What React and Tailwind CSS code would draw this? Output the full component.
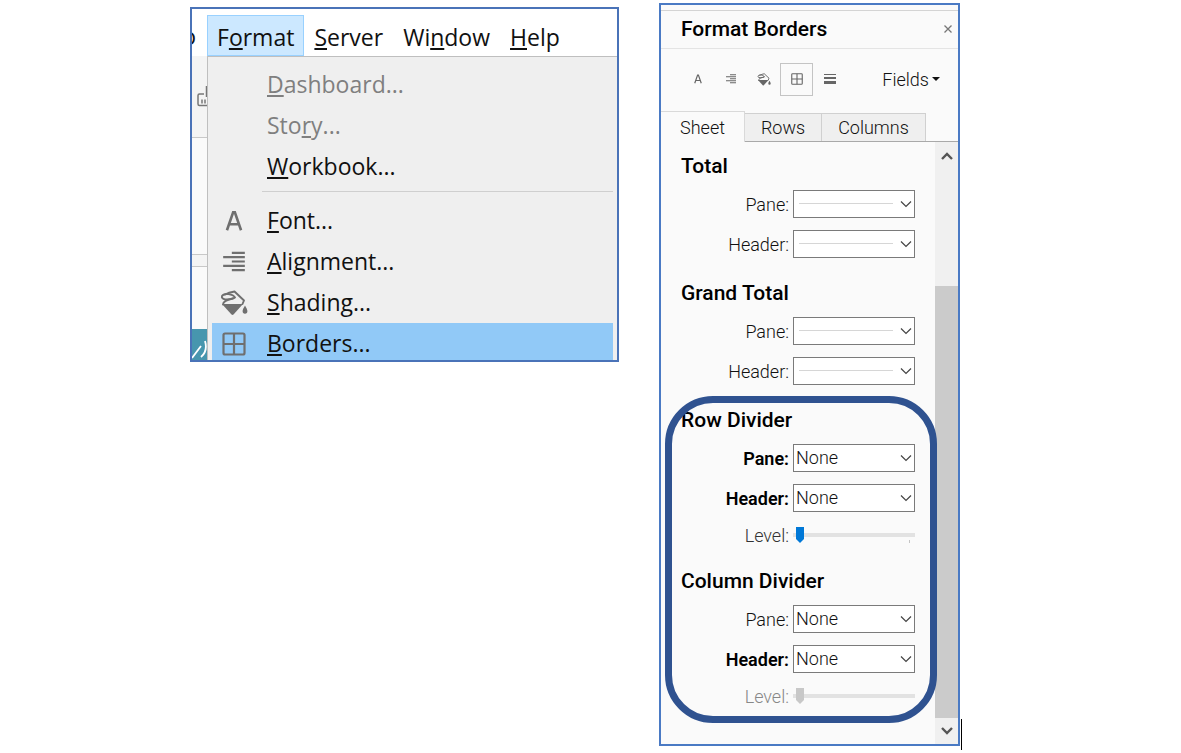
import React from "react";

function FontIcon({ className }) {
  return (
    <svg viewBox="0 0 24 24" className={className} fill="none" stroke="currentColor" strokeWidth="2.4" aria-hidden="true">
      <path d="M5.500 20.500 11.200 4h1.600l5.700 16.500M8 15h8" />
    </svg>
  );
}

function AlignIcon({ className }) {
  return (
    <svg viewBox="0 0 24 24" className={className} fill="none" stroke="currentColor" strokeWidth="2" aria-hidden="true">
      <path d="M10 3.500h12M2 7.500h20M10 11.500h12M2 15.500h20M10 19.500h12" />
    </svg>
  );
}

function ShadingIcon({ className }) {
  return (
    <svg viewBox="0 0 28 26" className={className} fill="none" stroke="currentColor" strokeWidth="1.900" strokeLinejoin="round" strokeLinecap="round" aria-hidden="true">
      <path d="M5 4.500C8 3 12 2 14.500 1.500L24 10.500 22.500 14" />
      <path d="M15 7.500C13 4 4 2.500 2 6c-1.200 3.500 5 4.800 12.500 1.800" />
      <path d="M13 8.500C8 9.500 3 11 3 14.500" />
      <path d="M2 14h21L13.500 24.500Q12.500 25.300 11.500 24.500z" fill="currentColor" stroke="none" />
      <path d="M25 15.500c1.300 2.400 2.400 4 2.400 5.600a2.400 2.600 0 0 1-4.800 0c0-1.600 1.100-3.200 2.400-5.600z" fill="currentColor" stroke="none" />
    </svg>
  );
}

function BordersIcon({ className }) {
  return (
    <svg viewBox="0 0 24 24" className={className} fill="none" stroke="currentColor" strokeWidth="2.200" aria-hidden="true">
      <rect x="1.500" y="1.500" width="21" height="21" rx="1.500" />
      <path d="M12 1.500v21M1.500 12h21" />
    </svg>
  );
}

function LinesIcon({ className }) {
  return (
    <svg viewBox="0 0 12 12" className={className} fill="currentColor" aria-hidden="true">
      <path d="M0 1h12v1H0zM0 4h12v2H0zM0 8h12v3H0z" />
    </svg>
  );
}

const menuButton = "h-[41px] border border-transparent px-[9px] leading-[43px] whitespace-nowrap";

function MenuItem({ icon, disabled, active, children }) {
  return (
    <button
      type="button"
      disabled={disabled}
      className={`ml-1 mr-1 flex items-start overflow-hidden text-left leading-[41px] ${
        active ? "h-[37px] bg-[#91c9f7]" : "h-[41px]"
      } ${disabled ? "text-[#7f7f7f]" : "text-[#111]"}`}
    >
      <span className="flex h-[41px] w-[43px] shrink-0 items-center justify-center text-[#6f6f6f]">{icon}</span>
      <span className="ml-3">{children}</span>
    </button>
  );
}

function FormatMenu() {
  return (
    <section className="flex w-[429px] flex-col overflow-hidden border-2 border-[#4a73b8] bg-white font-['Open_Sans','Noto_Sans',sans-serif] text-[23px] text-[#111]">
      <div className="flex h-[47px] items-end">
        <div className="flex h-[41px] w-[15px] justify-end overflow-hidden pr-[11px] leading-[43px]">o</div>
        <nav className="flex">
          <button type="button" className="h-[41px] border border-[#99d1ff] bg-[#cce8ff] px-[9px] leading-[43px] whitespace-nowrap">
            F<u>o</u>rmat
          </button>
          <button type="button" className={menuButton}><u>S</u>erver</button>
          <button type="button" className={menuButton}>Wi<u>n</u>dow</button>
          <button type="button" className={menuButton}><u>H</u>elp</button>
        </nav>
      </div>
      <div className="flex">
        <div className="flex w-[15px] shrink-0 flex-col overflow-hidden bg-[#fafafa]">
          <div className="flex h-[82px] items-center border-b border-[#c8c8c8] bg-[#f4f4f4] pl-[5px]">
            <svg viewBox="0 0 10 24" className="h-6 w-[10px]" fill="none" stroke="#777" strokeWidth="1.500" aria-hidden="true">
              <path d="M7 9H2.500Q1 9 1 10.500V19q0 1.500 1.500 1.500H10M9.500 1v11M5 14.500v4M8 14.500v4" />
            </svg>
          </div>
          <div className="h-[117px] border-b border-[#c8c8c8]" />
          <div className="h-[12px] border-b border-[#c8c8c8] bg-[#f4f4f4]" />
          <div className="grow" />
          <svg viewBox="0 0 15 31" className="h-[31px] w-[15px] bg-[#4796ae]" fill="none" stroke="#fff" strokeWidth="1.800" aria-hidden="true">
            <path d="M0 29 9 17M9 28Q16 22 13 12" />
          </svg>
        </div>
        <div className="flex grow flex-col border-t border-l border-[#bfbfbf] bg-[#efefef] pt-[7px]">
          <MenuItem disabled><u>D</u>ashboard...</MenuItem>
          <MenuItem disabled>Sto<u>r</u>y...</MenuItem>
          <MenuItem><u>W</u>orkbook...</MenuItem>
          <hr className="mt-1 mr-1 mb-2 ml-[54px] border-t border-[#cfcfcf]" />
          <MenuItem icon={<FontIcon className="size-[26px]" />}><u>F</u>ont...</MenuItem>
          <MenuItem icon={<AlignIcon className="size-[26px]" />}><u>A</u>lignment...</MenuItem>
          <MenuItem icon={<ShadingIcon className="h-[26px] w-7" />}><u>S</u>hading...</MenuItem>
          <MenuItem active icon={<BordersIcon className="size-6" />}><u>B</u>orders...</MenuItem>
        </div>
      </div>
    </section>
  );
}

function Field({ id, label, bold, value }) {
  return (
    <div className="flex items-center justify-end gap-1">
      <label htmlFor={id} className={bold ? "font-semibold text-black" : ""}>{label}:</label>
      <div className="relative h-7 w-[122px]">
        <select id={id} defaultValue={value || "line"} className="block h-7 w-full appearance-none border border-[#7a7a7a] bg-white pl-[2px] text-[18px] leading-[26px]">
          {value ? <option value={value}>{value}</option> : <option value="line" aria-label="Line" />}
        </select>
        {!value && <span className="pointer-events-none absolute top-[13px] right-[22px] left-[6px] h-px bg-[#d6d6d6]" />}
        <svg viewBox="0 0 12 8" className="pointer-events-none absolute top-[10px] right-[3px] h-2 w-3" fill="none" stroke="#444" strokeWidth="1.200" aria-hidden="true">
          <path d="M1 1.500 6 6.500 11 1.500" />
        </svg>
      </div>
    </div>
  );
}

function Level({ id, disabled }) {
  return (
    <div className={`flex h-[22px] items-center justify-end gap-1 ${disabled ? "text-[#888]" : "text-[#333]"}`}>
      <label htmlFor={id}>Level:</label>
      <div className="relative flex w-[122px] items-center">
        <input
          id={id}
          type="range"
          min="0"
          max="1"
          defaultValue="0"
          disabled={disabled}
          className={`h-4 w-full appearance-none bg-[linear-gradient(#e2e2e2,#e2e2e2)] bg-[length:100%_4px] bg-center bg-no-repeat px-[3px] [&::-webkit-slider-thumb]:h-4 [&::-webkit-slider-thumb]:w-2 [&::-webkit-slider-thumb]:appearance-none [&::-webkit-slider-thumb]:[clip-path:polygon(0_0,100%_0,100%_75%,50%_100%,0_75%)] ${
            disabled ? "[&::-webkit-slider-thumb]:bg-[#c8c8c8]" : "[&::-webkit-slider-thumb]:bg-[#0078d7]"
          }`}
        />
        {!disabled && <span className="absolute right-[5px] bottom-0 h-[3px] w-px bg-[#c4c4c4]" />}
      </div>
    </div>
  );
}

function Group({ title, children }) {
  return (
    <section className="flex flex-col gap-3">
      <h3 className="text-[21px] leading-6 font-medium text-black">{title}</h3>
      {children}
    </section>
  );
}

function BordersPanel() {
  return (
    <section className="flex w-[301px] flex-col border-2 border-[#4a7ac4] bg-[#fafafa] font-[Roboto,sans-serif] text-[18px] font-light text-[#111]">
      <header className="mt-[5px] flex h-[39px] items-center justify-between border-y border-t-[#d4d4d4] border-b-[#e4e4e4] pr-1 pb-[2px] pl-5">
        <h2 className="text-[21px] leading-6 font-medium text-black">Format Borders</h2>
        <button type="button" aria-label="Close" className="flex size-3 items-center justify-center">
          <svg viewBox="0 0 8 8" className="size-2" stroke="#777" strokeWidth="1.300" aria-hidden="true">
            <path d="M.5.5l7 7M7.500.5l-7 7" />
          </svg>
        </button>
      </header>
      <div className="flex h-[62px] items-center pb-[2px] pl-5 text-[#666]">
        <button type="button" aria-label="Font" className="flex size-[33px] items-center justify-center"><FontIcon className="size-3" /></button>
        <button type="button" aria-label="Alignment" className="flex size-[33px] items-center justify-center"><AlignIcon className="size-3" /></button>
        <button type="button" aria-label="Shading" className="flex size-[33px] items-center justify-center"><ShadingIcon className="h-[13px] w-[14px]" /></button>
        <button type="button" aria-label="Borders" className="flex size-[33px] items-center justify-center border border-[#c4c4c4]"><BordersIcon className="size-3" /></button>
        <button type="button" aria-label="Lines" className="flex size-[33px] items-center justify-center"><LinesIcon className="size-3" /></button>
        <button type="button" className="mr-[18px] ml-auto flex items-center gap-[3px] text-[#111]">
          Fields
          <svg viewBox="0 0 8 4" className="h-1 w-2" fill="#111" aria-hidden="true"><path d="M0 0h8L4 4z" /></svg>
        </button>
      </div>
      <div role="tablist" className="flex h-[31px] items-stretch">
        <button type="button" role="tab" aria-selected="true" className="w-[84px] border-t border-r border-[#d9d9d9]">Sheet</button>
        <div className="flex grow border-b border-[#a9a9a9] pt-[2px]">
          <button type="button" role="tab" aria-selected="false" className="w-[77px] border-t border-r border-[#d0d0d0] bg-[#efefef]">Rows</button>
          <button type="button" role="tab" aria-selected="false" className="w-[104px] border-t border-r border-[#d0d0d0] bg-[#efefef]">Columns</button>
        </div>
      </div>
      <div className="flex">
        <div className="flex grow flex-col gap-[23px] px-5 pt-3 pb-[37px]">
          <Group title="Total">
            <Field id="total-pane" label="Pane" />
            <Field id="total-header" label="Header" />
          </Group>
          <Group title="Grand Total">
            <Field id="grand-pane" label="Pane" />
            <Field id="grand-header" label="Header" />
          </Group>
          <div className="relative flex flex-col gap-[23px]">
            <Group title="Row Divider">
              <Field id="row-pane" label="Pane" value="None" bold />
              <Field id="row-header" label="Header" value="None" bold />
              <Level id="row-level" />
            </Group>
            <Group title="Column Divider">
              <Field id="column-pane" label="Pane" value="None" />
              <Field id="column-header" label="Header" value="None" bold />
              <Level id="column-level" disabled />
            </Group>
            <div className="pointer-events-none absolute -top-3 -right-[22px] -bottom-4 -left-4 rounded-[48px] border-[7px] border-[#2f5290]" />
          </div>
        </div>
        <div className="flex w-[23px] shrink-0 flex-col bg-[#f0f0f0]">
          <button type="button" aria-label="Scroll up" className="flex h-[27px] items-center justify-center">
            <svg viewBox="0 0 12 8" className="h-2 w-3" fill="none" stroke="#555" strokeWidth="2.400" aria-hidden="true"><path d="M1 7 6 2l5 5" /></svg>
          </button>
          <div className="flex grow flex-col pt-[117px]">
            <div className="grow bg-[#cbcbcb]" />
          </div>
          <button type="button" aria-label="Scroll down" className="flex h-[26px] items-center justify-center">
            <svg viewBox="0 0 12 8" className="h-2 w-3" fill="none" stroke="#555" strokeWidth="2.400" aria-hidden="true"><path d="M1 1l5 5 5-5" /></svg>
          </button>
        </div>
      </div>
    </section>
  );
}

export default function App() {
  return (
    <main className="flex min-h-screen items-start justify-center bg-white pt-[3px] pr-[29px]">
      <div className="mt-1 mr-10">
        <FormatMenu />
      </div>
      <div className="flex items-end gap-px">
        <BordersPanel />
        <span className="-mb-1 h-[31px] w-px bg-black" />
      </div>
    </main>
  );
}
